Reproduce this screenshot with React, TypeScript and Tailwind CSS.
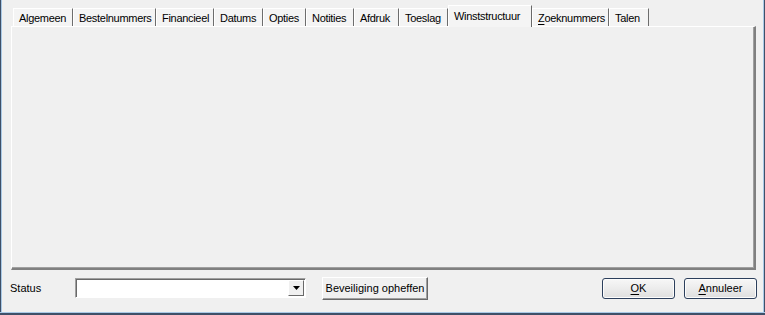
import React from "react";

// Tabbladen van het artikelvenster; breedtes afgemeten op het origineel
const tabs: { label: string; w: string; active?: boolean; accel?: boolean }[] = [
  { label: "Algemeen", w: "w-[60px]" },
  { label: "Bestelnummers", w: "w-[83px]" },
  { label: "Financieel", w: "w-[58px]" },
  { label: "Datums", w: "w-[49px]" },
  { label: "Opties", w: "w-[43px]" },
  { label: "Notities", w: "w-[48px]" },
  { label: "Afdruk", w: "w-[45px]" },
  { label: "Toeslag", w: "w-[49px]" },
  { label: "Winststructuur", w: "w-[84px]", active: true },
  { label: "Zoeknummers", w: "w-[77px]", accel: true },
  { label: "Talen", w: "w-[40px]" },
];

function Tab({ label, w, active, accel }: (typeof tabs)[number]) {
  const text = accel ? (
    <>
      <span className="underline underline-offset-[2px]">{label[0]}</span>
      {label.slice(1)}
    </>
  ) : (
    label
  );

  if (active) {
    return (
      <div
        className={`${w} relative z-10 -mb-px h-[22px] overflow-hidden whitespace-nowrap border-t border-l border-white border-r border-r-[#696969] bg-[#f4f4f4] pl-[5px] pt-[3px] leading-[14px] tracking-[-0.3px]`}
      >
        {text}
      </div>
    );
  }
  return (
    <div
      className={`${w} h-[18px] overflow-hidden whitespace-nowrap border-t border-l border-white border-r border-r-[#6d6d6d] bg-[#f4f4f4] pl-[5px] pt-[2px] leading-[14px] tracking-[-0.3px]`}
    >
      {text}
    </div>
  );
}

function VistaButton({ children }: { children: React.ReactNode }) {
  return (
    <div className="flex h-[21px] w-[73px] items-center justify-center rounded-[3px] border border-[#2c3f5c] bg-gradient-to-b from-[#f7f7f7] via-[#ececec] to-[#dedede] shadow-[inset_0_0_0_1px_#fcfcfc]">
      {children}
    </div>
  );
}

export default function App() {
  return (
    <div className="flex h-[315px] w-[765px] flex-col bg-[#f0f0f0] font-['Liberation_Sans',sans-serif] text-[11px] text-black">
      <div className="flex min-h-0 flex-1">
        {/* linker vensterrand */}
        <div className="w-px bg-[#3f5068]" />
        <div className="w-px bg-[#a9c9e6]" />

        <div className="flex flex-1 flex-col pl-[8px] pt-[5px]">
          {/* tabstrip */}
          <div className="ml-[3px] flex h-[21px] items-end">
            {tabs.map((t) => (
              <Tab key={t.label} {...t} />
            ))}
          </div>

          {/* tabpagina */}
          <div className="ml-px h-[244px] w-[745px] border-t border-l border-white border-r-2 border-b-2 border-r-[#808080] border-b-[#808080] bg-[#f0f0f0] shadow-[inset_-1px_-1px_0_#a0a0a0]" />

          {/* onderste balk */}
          <div className="mt-[7px] flex h-[23px] items-start">
            <span className="mt-[5px] w-[65px] leading-[13px]">Status</span>

            <div className="mt-px flex h-[20px] w-[231px] border-t border-l border-[#a0a0a0] border-r border-b border-r-white border-b-white bg-white shadow-[inset_1px_1px_0_#696969]">
              <div className="flex-1" />
              <div className="mr-px mt-px flex h-[16px] w-[16px] items-center justify-center border-t border-l border-white border-r border-b border-r-[#696969] border-b-[#696969] bg-[#f0f0f0]">
                <svg width="7" height="4" viewBox="0 0 7 4">
                  <path d="M0 0h7L3.5 4z" fill="#000" />
                </svg>
              </div>
            </div>

            <div className="ml-[16px] flex h-[23px] w-[106px] items-center justify-center border-t border-l border-white border-r border-b border-r-[#696969] border-b-[#696969] bg-[#f0f0f0] shadow-[inset_-1px_-1px_0_#a0a0a0]">
              Beveiliging opheffen
            </div>

            <div className="ml-auto mr-[6px] mt-px flex gap-[9px]">
              <VistaButton>
                <span>
                  <span className="underline underline-offset-[2px]">O</span>K
                </span>
              </VistaButton>
              <VistaButton>
                <span>
                  <span className="underline underline-offset-[2px]">A</span>nnuleer
                </span>
              </VistaButton>
            </div>
          </div>
        </div>

        {/* rechter vensterrand */}
        <div className="w-px bg-[#a9c9e6]" />
        <div className="w-px bg-[#3f5068]" />
      </div>
      {/* onderrand */}
      <div className="h-px bg-[#a9c9e6]" />
      <div className="h-[2px] bg-[#3f5068]" />
    </div>
  );
}
